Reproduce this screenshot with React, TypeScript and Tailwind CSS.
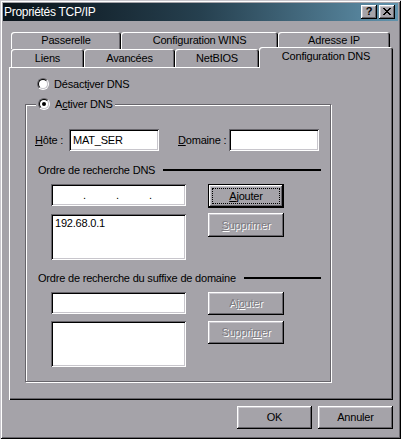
import React from "react";

const raised =
  "shadow-[inset_-1px_-1px_0_#000,inset_1px_1px_0_#fff,inset_-2px_-2px_0_#67656b,inset_2px_2px_0_#c8c6cc]";
const sunken =
  "shadow-[inset_1px_1px_0_#67656b,inset_-1px_-1px_0_#fff,inset_2px_2px_0_#000,inset_-2px_-2px_0_#c8c6cc]";
const tabShadow =
  "shadow-[inset_1px_1px_0_#fff,inset_-1px_0_0_#000,inset_-2px_0_0_#67656b]";
const disabledText = "text-[#7d7b81] [text-shadow:1px_1px_0_#fff]";

function Radio({ checked }: { checked?: boolean }) {
  return (
    <span className="flex h-[12px] w-[12px] shrink-0 items-center justify-center rounded-full border border-t-[#67656b] border-l-[#67656b] border-b-white border-r-white">
      <span className="flex h-[10px] w-[10px] items-center justify-center rounded-full border border-t-black border-l-black border-b-[#c8c6cc] border-r-[#c8c6cc] bg-white">
        {checked && <span className="h-[4px] w-[4px] rounded-full bg-black" />}
      </span>
    </span>
  );
}

function CloseGlyph() {
  const rows: number[][] = [
    [0, 1, 6, 7],
    [1, 2, 5, 6],
    [2, 3, 4, 5],
    [3, 4],
    [2, 3, 4, 5],
    [1, 2, 5, 6],
    [0, 1, 6, 7],
  ];
  return (
    <svg width="8" height="7" viewBox="0 0 8 7" shapeRendering="crispEdges">
      {rows.map((r, y) =>
        r.map((x) => <rect key={`${x}-${y}`} x={x} y={y} width="1" height="1" fill="#000" />)
      )}
    </svg>
  );
}

function Tab({ w, children }: { w: string; children: React.ReactNode }) {
  return (
    <div className={`flex h-full items-center justify-center rounded-t-[3px] ${tabShadow} ${w}`}>
      {children}
    </div>
  );
}

function TextBox({ h, children }: { h: string; children?: React.ReactNode }) {
  return <div className={`flex w-full bg-white ${sunken} ${h}`}>{children}</div>;
}

function Button({
  children,
  disabled,
  isDefault,
  h,
}: {
  children: React.ReactNode;
  disabled?: boolean;
  isDefault?: boolean;
  h: string;
}) {
  if (isDefault) {
    return (
      <div className={`flex w-full border border-black ${h}`}>
        <div className={`flex flex-1 p-[3px] ${raised}`}>
          <div className="flex flex-1 items-center justify-center border border-dotted border-black">
            {children}
          </div>
        </div>
      </div>
    );
  }
  return (
    <div
      className={`flex w-full items-center justify-center ${raised} ${h} ${disabled ? disabledText : ""}`}
    >
      {children}
    </div>
  );
}

export default function App() {
  return (
    <div className="flex h-[439px] w-[401px] flex-col bg-[#a5a3a9] p-[3px] font-['Liberation_Sans',Arial,sans-serif] text-[11px] tracking-[-0.2px] text-black shadow-[inset_1px_1px_0_#c8c6cc,inset_-1px_-1px_0_#000,inset_2px_2px_0_#fff,inset_-2px_-2px_0_#67656b]">
      {/* Title bar */}
      <div className="flex h-[18px] shrink-0 items-center bg-gradient-to-r from-[#0a131a] via-[#26404f] to-[#6193ad] pl-[1px] pr-[3px]">
        <span className="flex-1 text-[12px] tracking-[-0.3px] text-white">Propriétés TCP/IP</span>
        <div className="flex gap-[2px]">
          <div className={`flex h-[14px] w-[16px] items-center justify-center bg-[#a5a3a9] pb-[1px] text-[11px] font-bold ${raised}`}>
            ?
          </div>
          <div className={`flex h-[14px] w-[16px] items-center justify-center bg-[#a5a3a9] pb-[1px] ${raised}`}>
            <CloseGlyph />
          </div>
        </div>
      </div>

      {/* Tabs */}
      <div className="mt-[11px] flex shrink-0 flex-col pl-[8px]">
        <div className="flex h-[17px]">
          <Tab w="w-[110px]">Passerelle</Tab>
          <Tab w="w-[157px]">Configuration WINS</Tab>
          <Tab w="w-[112px]">Adresse IP</Tab>
        </div>
        <div className="flex h-[18px]">
          <Tab w="w-[73px]">Liens</Tab>
          <Tab w="w-[91px]">Avancées</Tab>
          <Tab w="w-[84px]">NetBIOS</Tab>
          <div
            className={`relative z-10 -mt-[2px] flex h-[21px] w-[134px] shrink-0 items-center justify-center rounded-t-[3px] bg-[#a5a3a9] pb-[2px] ${tabShadow}`}
          >
            Configuration DNS
          </div>
        </div>
      </div>

      {/* Panel */}
      <div className="ml-[6px] flex h-[333px] w-[384px] shrink-0 flex-col pt-[11px] shadow-[inset_1px_1px_0_#fff,inset_-1px_-1px_0_#000,inset_-2px_-2px_0_#67656b]">
        <div className="flex h-[12px] items-center gap-[5px] pl-[28px]">
          <Radio />
          <span>
            Désact<u>i</u>ver DNS
          </span>
        </div>

        {/* Group box */}
        <div className="relative ml-[16px] mt-[14px] flex h-[278px] w-[306px] flex-col border border-[#67656b] pt-[24px] shadow-[1px_1px_0_#fff,inset_1px_1px_0_#fff]">
          <div className="absolute left-[10px] top-[-7px] flex h-[12px] items-center gap-[5px] bg-[#a5a3a9] px-[2px]">
            <Radio checked />
            <span>
              A<u>c</u>tiver DNS
            </span>
          </div>

          <div className="flex h-[22px] items-center pl-[9px]">
            <span className="w-[34px] shrink-0">
              <u>H</u>ôte :
            </span>
            <div className="w-[90px] shrink-0">
              <TextBox h="h-[22px]">
                <span className="flex items-center pl-[4px]">MAT_SER</span>
              </TextBox>
            </div>
            <span className="ml-[19px] w-[51px] shrink-0">
              <u>D</u>omaine :
            </span>
            <div className="w-[90px] shrink-0">
              <TextBox h="h-[22px]" />
            </div>
          </div>

          <div className="mt-[12px] flex h-[14px] items-center pl-[12px] pr-[9px]">
            <span className="whitespace-nowrap">Ordre de recherche DNS</span>
            <div className="ml-[8px] h-[2px] flex-1 bg-black" />
          </div>

          <div className="mt-[7px] flex gap-[22px] pl-[25px]">
            <div className="flex w-[135px] flex-col gap-[8px]">
              <TextBox h="h-[22px]">
                <div className="flex items-center gap-[30px] pl-[32px]">
                  <span className="w-[3px]">.</span>
                  <span className="w-[3px]">.</span>
                  <span className="w-[3px]">.</span>
                </div>
              </TextBox>
              <TextBox h="h-[46px]">
                <span className="pl-[4px] pt-[3px] leading-[13px]">192.68.0.1</span>
              </TextBox>
            </div>
            <div className="flex w-[76px] flex-col gap-[5px]">
              <Button isDefault h="h-[24px]">
                <span>
                  <u>A</u>jouter
                </span>
              </Button>
              <Button disabled h="h-[24px]">
                <span>
                  <u>S</u>upprimer
                </span>
              </Button>
            </div>
          </div>

          <div className="mt-[11px] flex h-[14px] items-center pl-[12px] pr-[9px]">
            <span className="whitespace-nowrap">Ordre de recherche du suffixe de domaine</span>
            <div className="ml-[8px] h-[2px] flex-1 bg-black" />
          </div>

          <div className="mt-[7px] flex gap-[22px] pl-[25px]">
            <div className="flex w-[135px] flex-col gap-[7px]">
              <TextBox h="h-[22px]" />
              <TextBox h="h-[46px]" />
            </div>
            <div className="flex w-[76px] flex-col gap-[6px]">
              <Button disabled h="h-[23px]">
                <span>
                  Aj<u>o</u>uter
                </span>
              </Button>
              <Button disabled h="h-[23px]">
                <span>
                  Suppri<u>m</u>er
                </span>
              </Button>
            </div>
          </div>
        </div>
      </div>

      {/* Bottom buttons */}
      <div className="mt-[6px] flex justify-end gap-[6px] pr-[5px]">
        <div className="w-[75px]">
          <Button h="h-[23px]">OK</Button>
        </div>
        <div className="w-[75px]">
          <Button h="h-[23px]">Annuler</Button>
        </div>
      </div>
    </div>
  );
}
